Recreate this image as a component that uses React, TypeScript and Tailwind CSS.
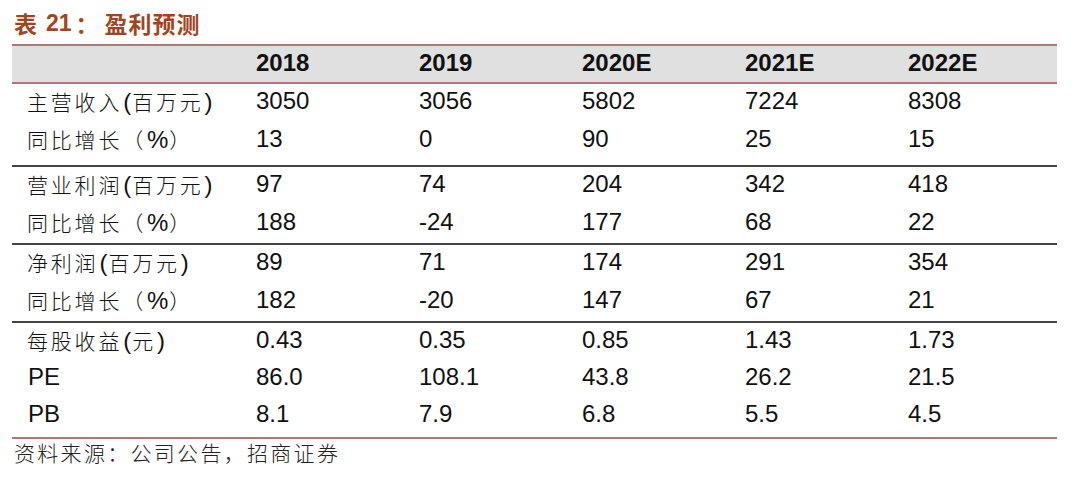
import React from "react";

const cols = ["2018", "2019", "2020E", "2021E", "2022E"];

const groups: { label: string; vals: string[] }[][] = [
  [
    { label: "主营收入(百万元)", vals: ["3050", "3056", "5802", "7224", "8308"] },
    { label: "同比增长（%）", vals: ["13", "0", "90", "25", "15"] },
  ],
  [
    { label: "营业利润(百万元)", vals: ["97", "74", "204", "342", "418"] },
    { label: "同比增长（%）", vals: ["188", "-24", "177", "68", "22"] },
  ],
  [
    { label: "净利润(百万元)", vals: ["89", "71", "174", "291", "354"] },
    { label: "同比增长（%）", vals: ["182", "-20", "147", "67", "21"] },
  ],
  [
    { label: "每股收益(元)", vals: ["0.43", "0.35", "0.85", "1.43", "1.73"] },
    { label: "PE", vals: ["86.0", "108.1", "43.8", "26.2", "21.5"] },
    { label: "PB", vals: ["8.1", "7.9", "6.8", "5.5", "4.5"] },
  ],
];

const gridCls = "grid grid-cols-[244px_163px_163px_163px_163px_1fr]";
const arial = "font-['Liberation_Sans',Arial,sans-serif]";
const cjk = "font-['Noto_Sans_CJK_SC',sans-serif]";

function Label({ text }: { text: string }) {
  const parts = text.match(/[\u3000-\u9fff\uff00-\uffef]+|[^\u3000-\u9fff\uff00-\uffef]+/g) || [];
  return (
    <>
      {parts.map((p, i) =>
        /[\u3000-\u9fff\uff00-\uffef]/.test(p) ? (
          <span key={i} className={`${cjk} text-[21px] tracking-[2.8px] font-light`}>
            {p}
          </span>
        ) : (
          <span key={i} className={`${arial} text-[24px] px-px`}>
            {p}
          </span>
        )
      )}
    </>
  );
}

function Row({ label, vals, last }: { label: string; vals: string[]; last: boolean }) {
  return (
    <div className={`${gridCls} ${last ? "h-[37px]" : "h-[38px]"}`}>
      <div className="pl-[15px] leading-[34px] text-[#111] whitespace-nowrap">
        <Label text={label} />
      </div>
      {vals.map((v, i) => (
        <div key={i} className={`${arial} leading-[34px] text-[24px] text-[#111]`}>
          {v}
        </div>
      ))}
      <div />
    </div>
  );
}

export default function App() {
  return (
    <div className="w-[1080px] h-[477px] bg-white overflow-hidden">
      <div className="pl-[12px] w-[1057px]">
        {/* Title */}
        <div className="h-[44px] flex items-center pt-[3px] text-[23px] font-bold text-[#a0461f]">
          <span className={`${cjk} pl-[2px]`}>表</span>
          <span className={`${arial} ml-[9px]`}>21</span>
          <span className={`${cjk} ml-[4px]`}>：</span>
          <span className={`${cjk} ml-[6px] tracking-[1px]`}>盈利预测</span>
        </div>

        {/* Header */}
        <div className={`${gridCls} h-[40px] bg-[#e0e0e0] border-y-2 border-[#b07676]`}>
          <div />
          {cols.map((c) => (
            <div key={c} className={`${arial} leading-[34px] text-[24px] font-bold text-[#111]`}>
              {c}
            </div>
          ))}
          <div />
        </div>

        {/* Body groups */}
        {groups.map((g, gi) => (
          <div
            key={gi}
            className={
              gi === 0
                ? "border-b-2 border-[#444] pb-[5px]"
                : gi < groups.length - 1
                ? "border-b-2 border-[#444]"
                : "border-b-2 border-[#b07676] pb-[3px]"
            }
          >
            {g.map((r, ri) => (
              <Row key={ri} label={r.label} vals={r.vals} last={gi === groups.length - 1} />
            ))}
          </div>
        ))}

        {/* Footer */}
        <div className={`${cjk} h-[28px] flex items-center pl-[2px] text-[21px] tracking-[2.3px] text-[#222] font-light`}>
          资料来源：公司公告，招商证券
        </div>
      </div>
    </div>
  );
}
